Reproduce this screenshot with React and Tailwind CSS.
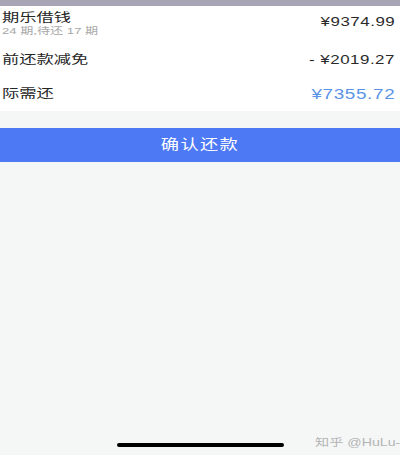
import React from 'react';

const font = { fontFamily: '"Liberation Sans", "Noto Sans CJK SC", sans-serif' };

function Row({ left, sub, right, rightClass, className }) {
  return (
    <div className={`flex items-center justify-between ${className}`}>
      <div className="pl-[2px]">
        <div className="origin-left scale-x-[1.38] text-[12.5px] leading-[13px] text-[#262626] whitespace-nowrap">{left}</div>
        {sub && (
          <div className="origin-left scale-x-[1.38] text-[9.5px] leading-[10px] mt-[1px] text-[#a8a8a8] whitespace-nowrap">{sub}</div>
        )}
      </div>
      <div className={`origin-right scale-x-[1.3] pr-[4px] whitespace-nowrap ${rightClass}`}>{right}</div>
    </div>
  );
}

export default function App() {
  return (
    <div className="relative w-[400px] h-[455px] overflow-hidden bg-[#f5f7f7] flex flex-col" style={font}>
      <div className="h-[6px] bg-[#a8a5b7]" />
      <div className="bg-white flex flex-col h-[105px]">
        <Row
          className="h-[34px] pt-[2px]"
          left="期乐借钱"
          sub="24 期,待还 17 期"
          right="¥9374.99"
          rightClass="text-[13px] text-[#2a2a2a] tracking-[0.4px] -mt-[4px]"
        />
        <Row
          className="h-[38px] pt-[2px]"
          left="前还款减免"
          right="- ¥2019.27"
          rightClass="text-[13px] text-[#2a2a2a] tracking-[0.4px]"
        />
        <Row
          className="h-[33px]"
          left="际需还"
          right="¥7355.72"
          rightClass="text-[14.5px] text-[#5b93e6] tracking-[0.5px]"
        />
      </div>
      <div className="mt-[17px] h-[34px] bg-[#4d79f5] flex items-center justify-center">
        <span className="scale-x-[1.35] text-[13.5px] text-white tracking-[1px]">确认还款</span>
      </div>
      <div className="flex-1" />
      <div className="h-[20px] relative">
        <div className="absolute left-[117px] top-[8px] w-[167px] h-[4px] rounded-full bg-black" />
        <div className="absolute left-[315px] top-[0px] origin-left scale-x-[1.35] text-[10.5px] text-[#b4b4b4] whitespace-nowrap">
          知乎 @HuLu-
        </div>
      </div>
    </div>
  );
}
